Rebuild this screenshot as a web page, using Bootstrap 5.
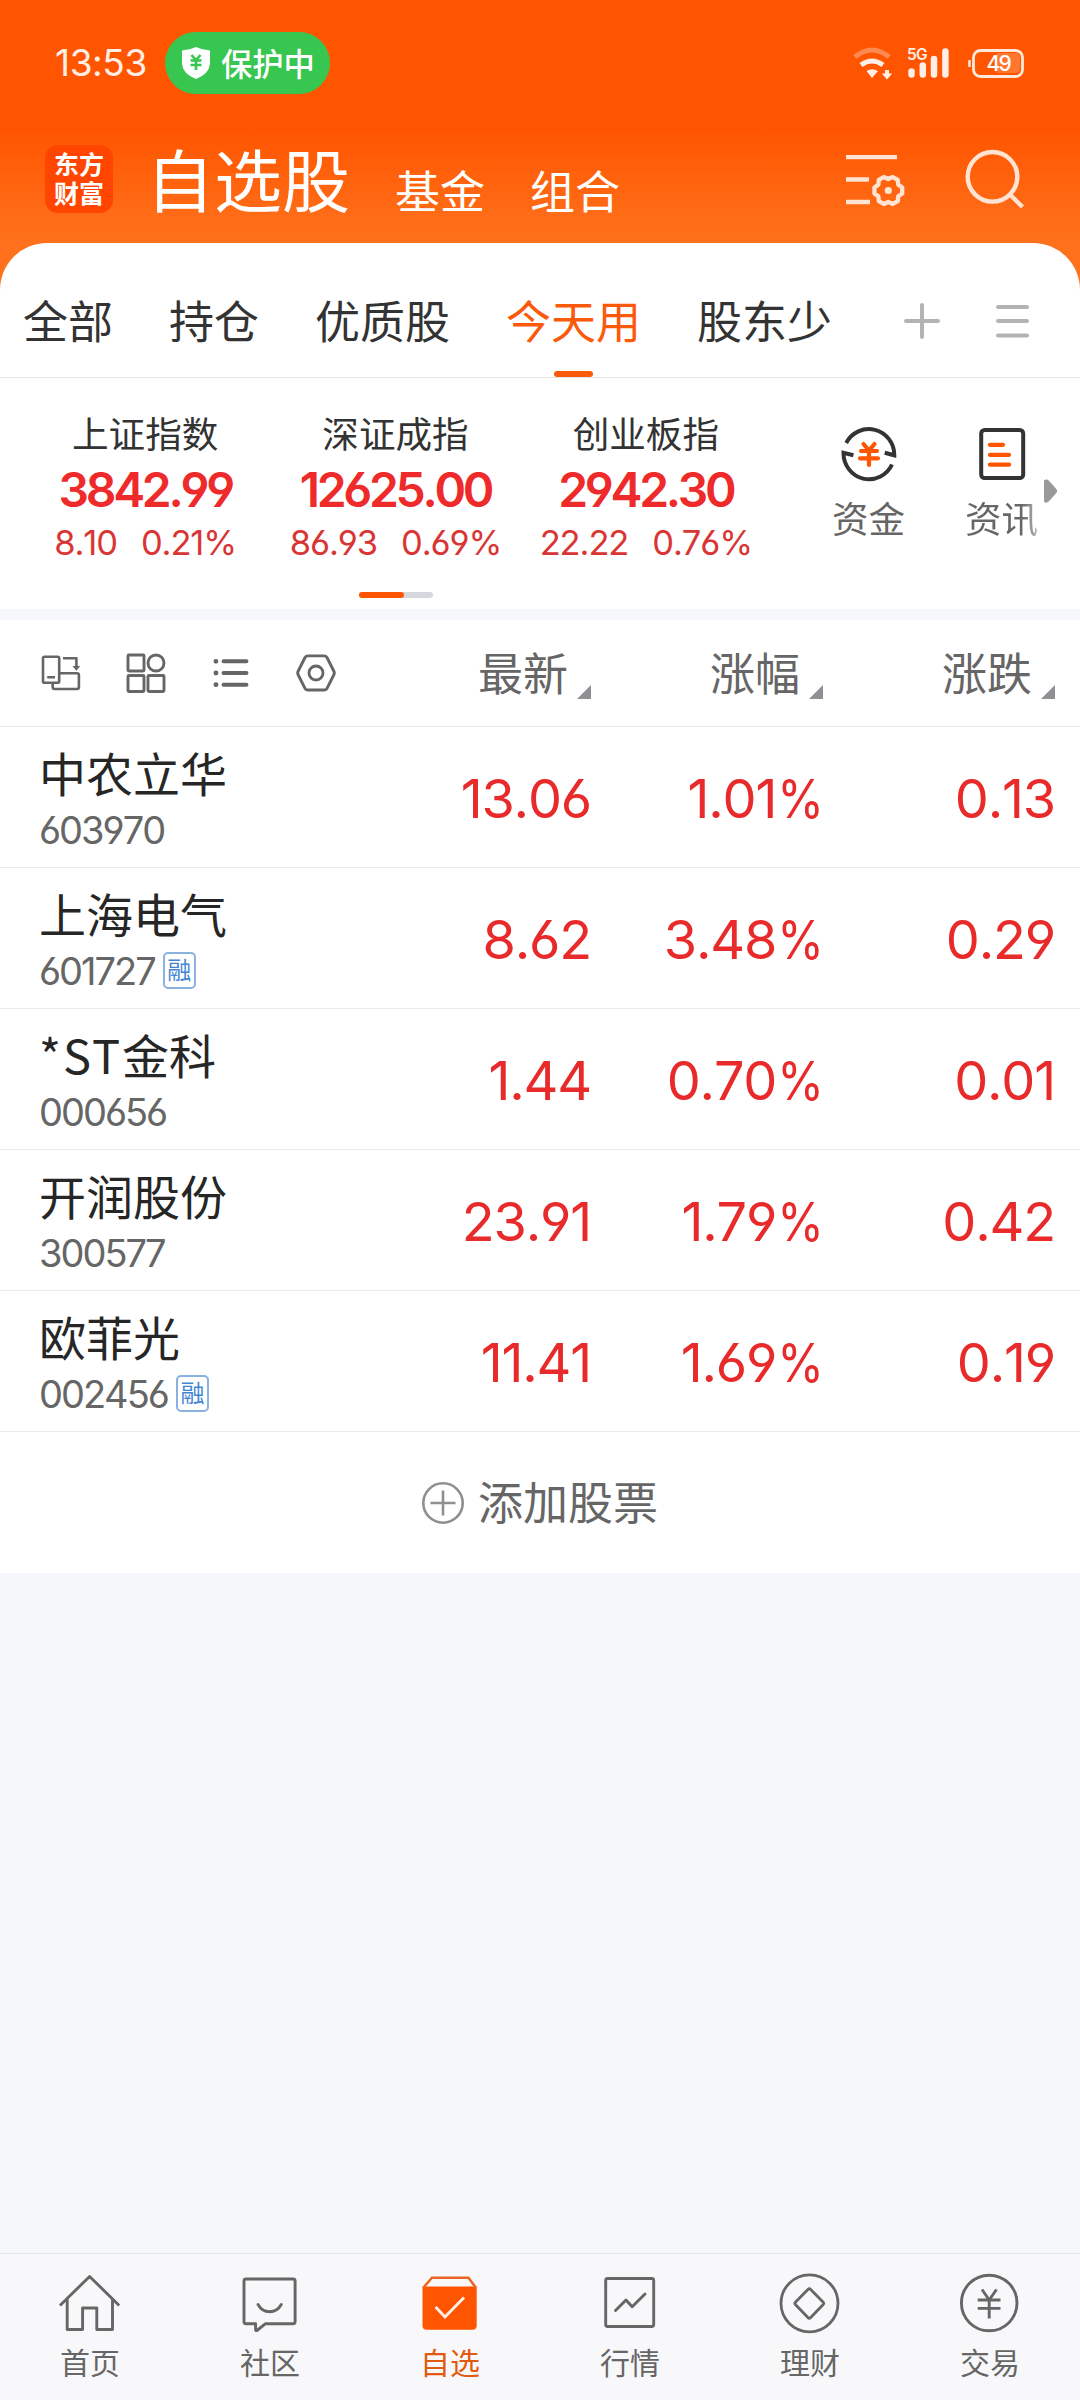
<!DOCTYPE html>
<html lang="zh-CN">
<head>
<meta charset="utf-8">
<meta name="viewport" content="width=device-width, initial-scale=1">
<title>自选股</title>
<link rel="stylesheet" href="https://cdn.jsdelivr.net/npm/bootstrap@5.3.0/dist/css/bootstrap.min.css">
<style>
  body { font-family: "Noto Sans CJK SC", sans-serif; background: #f6f7fa; color: #333; }
  .app { width: 1080px; height: 2400px; overflow: hidden; }
  svg { display: block; flex: none; fill: none; }
  .num { font-family: Inter, "Noto Sans CJK SC", sans-serif; font-feature-settings: "cv03", "cv04"; font-kerning: none; white-space: nowrap; }

  .hero { height: 290px; background: linear-gradient(#ff5500 0, #ff5500 130px, #ff6a15 210px, #ff711c 243px); }
  .statusbar { height: 108px; padding: 32px 55px 0 55px; }
  .clock { font-size: 37px; line-height: 62px; letter-spacing: -.4px; color: #ffeee5; width: 110px; }
  .guard { width: 165px; height: 62px; padding-left: 17px; background: #37c64f; font-size: 31.3px; line-height: 58px; font-weight: 500; }
  .titlebar { height: 135px; padding-left: 45px; padding-right: 55px; }
  .logo { width: 68px; height: 68px; margin-top: 37px; border-radius: 13px; background: #ff4500; font-size: 25px; line-height: 29px; font-weight: 700; padding-top: 4px; }
  .title-main { font-size: 68px; line-height: 80px; margin: 30px 0 0 33px; }
  .title-sub { font-size: 45px; line-height: 54px; margin: 55px 0 0 45px; }

  .sheet { margin-top: -47px; border-radius: 47px 47px 0 0; }
  .tabs { height: 135px; padding-left: 23px; border-bottom: 1px solid #e5e5e5; gap: 56px; }
  .tab-item { font-size: 45px; line-height: 60px; padding-top: 47px; white-space: nowrap; }
  .tab-item.active { color: #fa5a0a; }
  .tab-item.active::after { content: ""; width: 39px; height: 6px; border-radius: 3px; margin-top: 21px; background: #fa5a0a; }

  .market { height: 231px; padding-left: 20px; }
  .indices { width: 751px; padding-top: 35px; }
  .index-name { font-size: 36.6px; line-height: 40px; }
  .index-val { font-size: 48px; line-height: 50px; margin-top: 12px; font-weight: 600; letter-spacing: -3.3px; color: #ee2a2a; }
  .index-chg { font-size: 34.5px; line-height: 40px; margin-top: 8px; gap: 24px; letter-spacing: -1.1px; color: #d93535; }
  .pager { width: 74px; height: 6px; border-radius: 3px; margin: 29px auto 0; background: #d5d8dc; }
  .pager div { width: 45px; height: 6px; border-radius: 3px; background: #ff5500; }
  .shortcuts { margin-left: 31px; padding-top: 48px; }
  .shortcut { width: 133px; font-size: 36.5px; line-height: 40px; color: #666; }
  .shortcut div { margin-top: 16px; }
  .more-arrow { position: absolute; left: 1043px; top: 101px; }
  .fade-r { background: linear-gradient(90deg, #666 78%, #bbb); -webkit-background-clip: text; color: transparent; }
  .band { height: 11px; background: #f6f7fa; }

  .line-b { border-bottom: 1px solid #ebebed; }
  .toolrow { height: 107px; padding: 0 25px 0 41px; }
  .toolrow .icons { gap: 45px; }
  .colhead { width: 232px; height: 56px; gap: 9px; font-size: 45px; line-height: 56px; color: #666; }
  .colhead span { margin-bottom: 1px; }
  .colhead svg { margin-bottom: 2px; }
  .stock { height: 141px; padding: 0 25px 0 39px; }
  .stock-name { font-size: 47px; line-height: 56px; margin-top: 17px; color: #262626; white-space: nowrap; }
  .stock-name .latin { letter-spacing: 2px; }
  .stock-code { font-size: 38px; line-height: 40px; margin-top: 10px; gap: 8px; color: #666; letter-spacing: -2px; }
  .margin-tag { width: 33px; height: 37px; margin-bottom: 2px; border: 2px solid #8ab2e0; border-radius: 5px; font: 24px/30px "Noto Sans CJK SC", sans-serif; letter-spacing: 0; color: #4385d3; text-align: center; display: flex; justify-content: center; }
  .quote { width: 232px; padding-top: 4px; font-size: 54px; line-height: 60px; letter-spacing: -1.2px; text-align: right; color: #e82a2a; }
  .pct { display: inline-block; transform: scaleX(.88); transform-origin: right center; margin-left: -5px; }
  .addrow { height: 141px; gap: 14px; font-size: 45px; line-height: 56px; color: #666; }
  .addrow span { margin-bottom: 3px; }

  .tabbar { height: 147px; border-top: 1px solid #e3e4e6; background: #f8f8fa; padding-top: 16px; }
  .tabbar .entry { width: 180px; font-size: 30px; line-height: 36px; color: #666; gap: 9px; }
  .tabbar .entry.on { color: #e05a10; }
</style>
</head>
<body>
<div class="app d-flex flex-column">
  <header class="hero text-white flex-shrink-0">
    <div class="statusbar d-flex align-items-start">
      <div class="clock num">13:53</div>
      <div class="guard rounded-pill d-flex align-items-center">
        <svg width="28" height="32" viewBox="0 0 28 32"><path d="M14 0Q20 3 28 3.500V17Q27 27 14 32Q1 27 0 17V3.500Q8 3 14 0Z" fill="#fff"/><path d="M9.500 8L14 13L18.500 8M8.500 13.500H19.500M8.500 18H19.500M14 13V23" stroke="#37c64f" stroke-width="2.600"/></svg>
        <div style="margin-left:11px">保护中</div>
      </div>
      <svg class="ms-auto" width="174" height="62" viewBox="0 0 174 62">
        <g fill="none" stroke="#ffeee5">
          <path d="M4 25Q21 11 38 25" stroke="#ff8a50" stroke-width="5"/>
          <path d="M10 33Q21 25 32 33" stroke-width="5"/>
          <path d="M36 38V45" stroke-width="4"/>
        </g>
        <path d="M15.500 39Q21 35.500 27 39L21 46ZM30.800 41.500H41.200L36 47.500Z" fill="#ffeee5"/>
        <text x="56" y="28" font-family="Inter,sans-serif" font-size="15.500" font-weight="600" letter-spacing="-.8" fill="#ffeee5">5G</text>
        <g stroke="#ffeee5" stroke-width="6.500" stroke-linecap="round"><path d="M60.500 39.500V42.500M71.800 33.500V42.500M83 27V42.500M94.400 19.500V42.500"/></g>
        <path d="M146 21H164Q169 21 169 26V36Q169 41 164 41H146Z" fill="#ff7630"/>
        <rect x="122.500" y="18.500" width="49" height="26" rx="7" stroke="#ffe9dc" stroke-width="2.800"/>
        <path d="M118.500 28V35" stroke="#ffe9dc" stroke-width="2.500"/>
        <text x="135.500" y="39" font-family="Inter,sans-serif" font-size="21" font-weight="500" letter-spacing="-1.800" fill="#fff">49</text>
      </svg>
    </div>
    <div class="titlebar d-flex align-items-start">
      <div class="logo text-center">东方<br>财富</div>
      <div class="title-main">自选股</div>
      <div class="title-sub">基金</div>
      <div class="title-sub">组合</div>
      <svg class="ms-auto" style="margin-top:47px" width="60" height="54" viewBox="0 0 60 54" stroke="#ffe4d4" stroke-width="4.300">
        <path d="M1 2.200H52M1 24.500H24M1 47H25"/>
        <g transform="translate(43.300 35.500)"><path stroke-linejoin="round" d="M13.900-3V3L10 5.750L9.500 10.550L4.400 13.500L0 11.500L-4.400 13.500L-9.500 10.550L-10 5.750L-13.900 3V-3L-10-5.750L-9.500-10.550L-4.400-13.500L0-11.500L4.400-13.500L9.500-10.550L10-5.750Z"/><circle r="3.600" fill="#ffe4d4" stroke="none"/></g>
      </svg>
      <svg style="margin:41px 0 0 60px" width="60" height="60" viewBox="0 0 60 60" stroke="#ffe4d4" stroke-width="4.400"><circle cx="27.500" cy="27.800" r="24.800"/><path d="M45 45.500L57.500 58"/></svg>
    </div>
  </header>

  <main class="sheet bg-white flex-shrink-0 position-relative">
    <nav class="tabs d-flex">
      <div class="tab-item">全部</div>
      <div class="tab-item">持仓</div>
      <div class="tab-item">优质股</div>
      <div class="tab-item active d-flex flex-column align-items-center">今天用</div>
      <div class="tab-item">股东少</div>
      <svg style="margin:60px 0 0 16px" width="36" height="36" viewBox="0 0 36 36" stroke="#b3b3b3" stroke-width="4" stroke-linecap="round"><path d="M2 18H34M18 2V34"/></svg>
      <svg style="margin-top:60px" width="34" height="36" viewBox="0 0 34 36" stroke="#b3b3b3" stroke-width="4" stroke-linecap="round"><path d="M2 4H31M2 18H31M2 32.500H31"/></svg>
    </nav>

    <section class="market d-flex position-relative">
      <div class="indices">
        <div class="row g-0 text-center">
          <div class="col"><div class="index-name">上证指数</div><div class="index-val num">3842.99</div><div class="index-chg num d-flex justify-content-center"><span>8.10</span><span>0.21%</span></div></div>
          <div class="col"><div class="index-name">深证成指</div><div class="index-val num">12625.00</div><div class="index-chg num d-flex justify-content-center"><span>86.93</span><span>0.69%</span></div></div>
          <div class="col"><div class="index-name">创业板指</div><div class="index-val num">2942.30</div><div class="index-chg num d-flex justify-content-center"><span>22.22</span><span>0.76%</span></div></div>
        </div>
        <div class="pager"><div></div></div>
      </div>
      <div class="shortcuts d-flex">
        <div class="shortcut d-flex flex-column align-items-center">
          <svg width="56" height="56" viewBox="0 0 56 56"><g stroke="#333" stroke-width="4" stroke-linecap="butt" stroke-linejoin="miter"><path d="M5.200 17A25.500 26 0 0 1 53.300 29.300L43.700 26.800"/><path d="M51 38.500A25.500 26 0 0 1 2.500 26.700L12.400 29.200"/></g><path d="M22.500 18L28 24.500L33.500 18M20 25H36M19 32.300H37M28 25V39" stroke="#ff5500" stroke-width="4.200" stroke-linecap="round"/></svg>
          <div>资金</div>
        </div>
        <div class="shortcut d-flex flex-column align-items-center">
          <svg width="56" height="56" viewBox="0 0 56 56"><rect x="7.200" y="4" width="42" height="48" rx="3.500" stroke="#333" stroke-width="4"/><path d="M16 18.800H29M16 28.800H35M16 38.700H35" stroke="#ff5500" stroke-width="4.300" stroke-linecap="round"/></svg>
          <div class="fade-r">资讯</div>
        </div>
      </div>
      <svg class="more-arrow" width="16" height="24" viewBox="0 0 16 24"><path d="M1 2Q1 0 4 0.500Q6 1 14 11V13Q6 23 4 23.500Q1 24 1 22Z" fill="#999"/></svg>
    </section>
    <div class="band"></div>

    <section class="toolrow line-b d-flex align-items-center">
      <div class="icons d-flex me-auto">
        <svg width="40" height="40" viewBox="0 0 40 40" stroke="#666" stroke-width="2.600" stroke-linejoin="round"><rect x="2" y="3.700" width="16.200" height="26" rx="1.500"/><path d="M6.200 24.300H14M18.200 20.300H36Q37.900 20.300 37.900 22.300V34Q37.900 36 36 36H13.700Q11.700 36 11.700 34V29.700M22 5.300H35.400V14"/><path d="M31.500 13H39.200L35.400 17.700Z" fill="#666" stroke="none"/></svg>
        <svg width="40" height="40" viewBox="0 0 40 40" stroke="#666" stroke-width="2.900" stroke-linejoin="round"><rect x="2" y="2" width="16" height="16" rx="1"/><circle cx="30" cy="10" r="8"/><rect x="2" y="22.500" width="16" height="16" rx="1"/><rect x="22" y="22.500" width="16" height="16" rx="1"/></svg>
        <svg width="40" height="40" viewBox="0 0 40 40" stroke="#666" stroke-width="3.900" stroke-linecap="round"><path d="M12.500 8.300H35.500M12.500 20H35.500M12.500 31.700H35.500"/><path d="M4.900 8.300h.1M4.900 20h.1M4.900 31.700h.1" stroke-width="4.800"/></svg>
        <svg width="40" height="40" viewBox="0 0 40 40" stroke="#666" stroke-width="2.900" stroke-linejoin="round"><path d="M12 2.900H28Q30 2.900 31 4.500L38 18.500Q38.600 20 38 21.500L31 35.400Q30 37 28 37H12Q10 37 9 35.400L2 21.500Q1.400 20 2 18.500L9 4.500Q10 2.900 12 2.900Z"/><circle cx="20" cy="20" r="7"/></svg>
      </div>
      <div class="colhead d-flex justify-content-end align-items-end"><span>最新</span><svg width="14" height="14" viewBox="0 0 14 14"><path d="M14 0V14H0Z" fill="#909094"/></svg></div>
      <div class="colhead d-flex justify-content-end align-items-end"><span>涨幅</span><svg width="14" height="14" viewBox="0 0 14 14"><path d="M14 0V14H0Z" fill="#909094"/></svg></div>
      <div class="colhead d-flex justify-content-end align-items-end"><span>涨跌</span><svg width="14" height="14" viewBox="0 0 14 14"><path d="M14 0V14H0Z" fill="#909094"/></svg></div>
    </section>

    <section>
      <div class="stock line-b d-flex align-items-center">
        <div class="me-auto align-self-start"><div class="stock-name">中农立华</div><div class="stock-code num d-flex align-items-center">603970</div></div>
        <div class="quote num">13.06</div><div class="quote num">1.01<span class="pct">%</span></div><div class="quote num">0.13</div>
      </div>
      <div class="stock line-b d-flex align-items-center">
        <div class="me-auto align-self-start"><div class="stock-name">上海电气</div><div class="stock-code num d-flex align-items-center">601727<span class="margin-tag">融</span></div></div>
        <div class="quote num">8.62</div><div class="quote num">3.48<span class="pct">%</span></div><div class="quote num">0.29</div>
      </div>
      <div class="stock line-b d-flex align-items-center">
        <div class="me-auto align-self-start"><div class="stock-name"><span class="latin">*ST</span>金科</div><div class="stock-code num d-flex align-items-center">000656</div></div>
        <div class="quote num">1.44</div><div class="quote num">0.70<span class="pct">%</span></div><div class="quote num">0.01</div>
      </div>
      <div class="stock line-b d-flex align-items-center">
        <div class="me-auto align-self-start"><div class="stock-name">开润股份</div><div class="stock-code num d-flex align-items-center">300577</div></div>
        <div class="quote num">23.91</div><div class="quote num">1.79<span class="pct">%</span></div><div class="quote num">0.42</div>
      </div>
      <div class="stock line-b d-flex align-items-center">
        <div class="me-auto align-self-start"><div class="stock-name">欧菲光</div><div class="stock-code num d-flex align-items-center">002456<span class="margin-tag">融</span></div></div>
        <div class="quote num">11.41</div><div class="quote num">1.69<span class="pct">%</span></div><div class="quote num">0.19</div>
      </div>
      <div class="addrow d-flex justify-content-center align-items-center">
        <svg width="42" height="42" viewBox="0 0 42 42" stroke="#8e8e93" stroke-width="2.600"><circle cx="21" cy="21" r="19.700"/><path d="M8.500 21H33.500M21 8.500V33.500"/></svg>
        <span>添加股票</span>
      </div>
    </section>
  </main>

  <footer class="tabbar d-flex mt-auto flex-shrink-0">
    <div class="entry d-flex flex-column align-items-center">
      <svg width="64" height="64" viewBox="0 0 64 64" stroke="#666" stroke-width="2.900" stroke-linejoin="round"><path d="M2 35.500L31.600 6.500L61.200 35.500M9.200 29V59.500H24.600V38H38.800V59.500H54.500V29"/></svg>首页
    </div>
    <div class="entry d-flex flex-column align-items-center">
      <svg width="64" height="64" viewBox="0 0 64 64" stroke="#666" stroke-width="2.900" stroke-linejoin="round"><path d="M8 9H55Q57.100 9 57.100 11V51.700Q57.100 53.700 55 53.700H27.500L19 60.500Q17.600 61 17.600 59.500V53.700H8Q6 53.700 6 51.700V11Q6 9 8 9Z"/><path d="M20 34.500Q24 41.700 31.600 41.700T43.300 34.500" stroke-linecap="round"/></svg>社区
    </div>
    <div class="entry on d-flex flex-column align-items-center">
      <svg width="64" height="64" viewBox="0 0 64 64"><path d="M4.500 16.500H58.700V55.500Q58.700 59.700 54.500 59.700H8.700Q4.500 59.700 4.500 55.500Z" fill="#ff5500"/><path d="M5.500 17.500L14 7.800H50.500L57.700 17.500" stroke="#ec6424" stroke-width="2.500"/><path d="M17.600 37L27 47L46 27.500" stroke="#fff0e8" stroke-width="2.900"/></svg>自选
    </div>
    <div class="entry d-flex flex-column align-items-center">
      <svg width="64" height="64" viewBox="0 0 64 64" stroke="#666" stroke-width="2.900" stroke-linejoin="round" stroke-linecap="round"><rect x="7.700" y="8.500" width="48" height="48" rx="2"/><path d="M17.500 40.500L28 30L34.200 36.800L47 24"/></svg>行情
    </div>
    <div class="entry d-flex flex-column align-items-center">
      <svg width="64" height="64" viewBox="0 0 64 64" stroke="#666" stroke-width="2.800" stroke-linejoin="round"><circle cx="31.500" cy="33.300" r="28.500"/><path d="M29.900 19.500Q31.300 18 32.700 19.500L45 31.900Q46.400 33.300 45 34.700L32.700 47.500Q31.300 49 29.900 47.500L17.600 34.700Q16.200 33.300 17.600 31.900Z"/></svg>理财
    </div>
    <div class="entry d-flex flex-column align-items-center">
      <svg width="64" height="64" viewBox="0 0 64 64" stroke="#666" stroke-width="2.900"><circle cx="31.200" cy="33" r="27.800"/><path d="M24 19.500L31.200 30L38.500 19.500M19.700 30H42.500M19.700 38.400H42.500M31.200 30V48.500"/></svg>交易
    </div>
  </footer>
</div>
<script src="https://cdn.jsdelivr.net/npm/bootstrap@5.3.0/dist/js/bootstrap.bundle.min.js"></script>
</body>
</html>
